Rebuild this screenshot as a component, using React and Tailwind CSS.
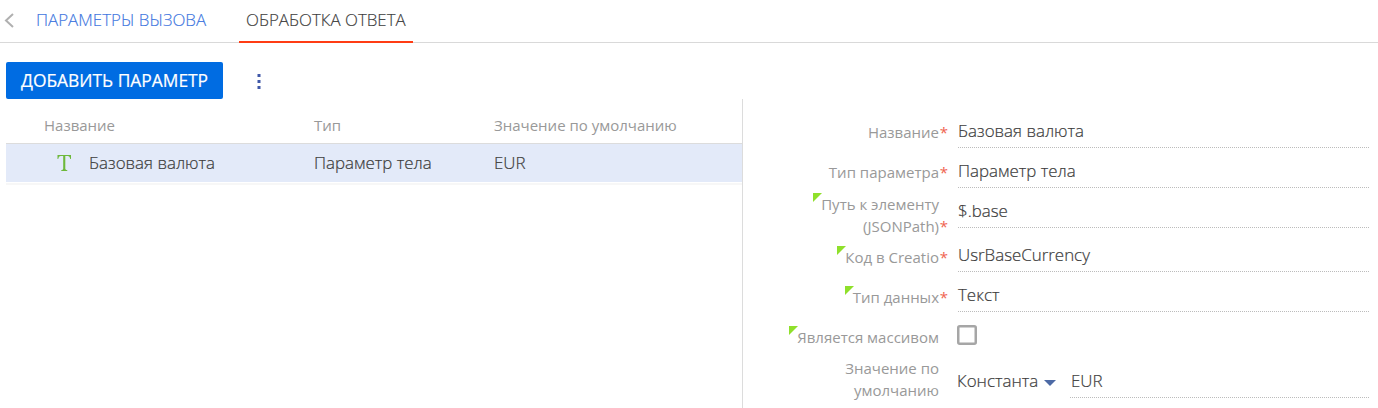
import React from "react";

function Corner() {
  return (
    <svg className="absolute -left-[8px] top-0" width="9" height="9" viewBox="0 0 9 9">
      <path d="M0 0H9L0 9Z" fill="#8fe02b" />
    </svg>
  );
}

function Label({ lines, required, hint, className = "pt-[9px]" }) {
  return (
    <div className={`flex w-[196px] shrink-0 items-start justify-end text-right text-[15px] leading-[22px] text-[#999] ${className}`}>
      <div className="relative whitespace-nowrap">
        {hint && <Corner />}
        {lines.map((l) => (
          <div key={l}>{l}</div>
        ))}
        {required && <span className="absolute -right-[9px] bottom-0 text-[#ef6350]">*</span>}
      </div>
    </div>
  );
}

function Dots() {
  return <div className="h-px bg-[repeating-linear-gradient(90deg,#bcbcbc_0px,#bcbcbc_1px,transparent_1px,transparent_2px)]" />;
}

function Field({ lines, value, hint, labelClass, rowClass = "h-[40px]" }) {
  return (
    <div className={`flex ${rowClass}`}>
      <Label lines={lines} required hint={hint} className={labelClass} />
      <div className="ml-[19px] w-[411px] text-[16.9px] font-light [-webkit-text-stroke:0.2px]">
        <div className="h-[35px] pt-[8px] leading-[22px]">{value}</div>
        <Dots />
      </div>
    </div>
  );
}

export default function App() {
  return (
    <div className="flex h-[408px] w-[1378px] flex-col overflow-hidden bg-white font-['Open_Sans',sans-serif] text-[#3c3c3c]">
      <nav className="flex h-[43px] shrink-0 border-b border-[#d9d9d9] text-[16.9px] font-light leading-[22px] [-webkit-text-stroke:0.15px]">
        <svg className="ml-[4px] mt-[13px]" width="11" height="15" viewBox="0 0 11 15">
          <path d="M9 1L2 7.5L9 14" fill="none" stroke="#b0b0b0" strokeWidth="2" />
        </svg>
        <div className="ml-[21px] w-[203px] whitespace-nowrap pt-[9px] text-[#4076e0]">ПАРАМЕТРЫ ВЫЗОВА</div>
        <div className="h-[43px] w-[174px] whitespace-nowrap border-b-2 border-[#ff3c14] pl-[7px] pt-[9px]">ОБРАБОТКА ОТВЕТА</div>
      </nav>
      <div className="flex h-[56px] shrink-0 items-end pl-[6px]">
        <button className="h-[37px] w-[217px] whitespace-nowrap rounded-[2px] bg-[#006ce2] pl-[15px] text-left text-[17.4px] leading-[37px] text-white [-webkit-text-stroke:0.2px]">ДОБАВИТЬ ПАРАМЕТР</button>
        <svg className="mb-[10px] ml-[34px]" width="4" height="15" viewBox="0 0 4 15">
          <path d="M.5 0h3v3h-3zM.5 6h3v3h-3zM.5 12h3v3h-3z" fill="#4058a8" />
        </svg>
      </div>
      <main className="flex grow">
        <section className="w-[743px] border-r border-[#dcdcdc] pl-[6px]">
          <div className="grid h-[45px] grid-cols-[270px_180px_1fr] border-b border-[#dcdcdc] pl-[38px] pt-[15px] text-[15px] leading-[22px] text-[#999]">
            <div>Название</div>
            <div>Тип</div>
            <div>Значение по умолчанию</div>
          </div>
          <div className="grid h-[38px] grid-cols-[45px_225px_180px_1fr] bg-[#e3eaf9] pl-[38px] pt-[8px] text-[16.9px] font-light leading-[22px] [-webkit-text-stroke:0.2px]">
            <svg className="ml-[13px] mt-[2px]" width="15" height="18" viewBox="0 0 15 18">
              <path d="M.5 1H14V5H13.3Q12.9 2.1 11 2.1H8.3V14.7Q8.3 16 10.3 16.3V17H4.2V16.3Q6.2 16 6.2 14.7V2.1H3.5Q1.6 2.1 1.2 5H.5Z" fill="#6db83b" />
            </svg>
            <div>Базовая валюта</div>
            <div>Параметр тела</div>
            <div>EUR</div>
          </div>
          <div className="mt-px h-[2px] bg-[#f7f7f7]" />
        </section>
        <section className="pt-[13px]">
          <Field lines={["Название"]} value="Базовая валюта" />
          <Field lines={["Тип параметра"]} value="Параметр тела" />
          <Field lines={["Путь к элементу", "(JSONPath)"]} value="$.base" hint labelClass="pt-px" rowClass="h-[44px]" />
          <Field lines={["Код в Creatio"]} value="UsrBaseCurrency" hint labelClass="pt-[10px]" />
          <Field lines={["Тип данных"]} value="Текст" hint labelClass="pt-[10px]" />
          <div className="flex h-[40px]">
            <Label lines={["Является массивом"]} hint className="pt-[10px]" />
            <svg className="ml-[18px] mt-[9px]" width="20" height="20" viewBox="0 0 20 20">
              <rect x="1.25" y="1.25" width="17.5" height="17.5" rx="1.5" fill="#fff" stroke="#a6a6a6" strokeWidth="2.5" />
            </svg>
          </div>
          <div className="flex h-[44px]">
            <Label lines={["Значение по", "умолчанию"]} className="pt-px" />
            <div className="ml-[18px] w-[87px] pt-[14px] text-[16.9px] font-light leading-[22px] [-webkit-text-stroke:0.2px]">Константа</div>
            <svg className="mt-[24px]" width="12" height="6" viewBox="0 0 12 6">
              <path d="M0 0H12L6 6Z" fill="#4d6aa5" />
            </svg>
            <div className="ml-[14px] w-[299px] text-[16.9px] font-light [-webkit-text-stroke:0.2px]">
              <div className="h-[41px] pl-px pt-[14px] leading-[22px]">EUR</div>
              <Dots />
            </div>
          </div>
        </section>
      </main>
    </div>
  );
}
